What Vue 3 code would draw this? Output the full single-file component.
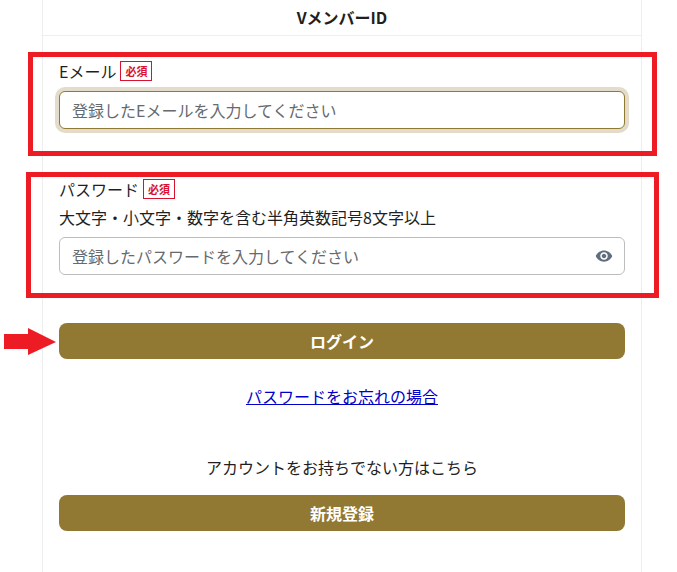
<template>
  <div class="page">
    <div class="panel">
      <h1 class="panel-title">VメンバーID</h1>
      <form class="login-form" @submit.prevent>
        <div class="form-group email-group">
          <div class="label-row">
            <label for="email">Eメール</label>
            <span class="required">必須</span>
          </div>
          <input id="email" class="text-input focused" type="text" placeholder="登録したEメールを入力してください" />
        </div>
        <div class="form-group password-group">
          <div class="label-row">
            <label for="password">パスワード</label>
            <span class="required">必須</span>
          </div>
          <p class="hint">大文字・小文字・数字を含む半角英数記号8文字以上</p>
          <div class="input-wrap">
            <input id="password" class="text-input" type="password" placeholder="登録したパスワードを入力してください" />
            <svg class="eye-icon" viewBox="0 0 24 24" width="18" height="18">
              <path fill="#5f6f7f" d="M12 4.5C7 4.5 2.73 7.61 1 12c1.73 4.39 6 7.5 11 7.5s9.27-3.11 11-7.5c-1.73-4.39-6-7.5-11-7.5zM12 17c-2.76 0-5-2.24-5-5s2.24-5 5-5 5 2.24 5 5-2.24 5-5 5zm0-8c-1.66 0-3 1.34-3 3s1.34 3 3 3 3-1.34 3-3-1.34-3-3-3z" />
            </svg>
          </div>
        </div>
        <button class="gold-btn login-btn" type="button">ログイン</button>
        <div class="forgot"><a href="#">パスワードをお忘れの場合</a></div>
        <p class="no-account">アカウントをお持ちでない方はこちら</p>
        <button class="gold-btn" type="button">新規登録</button>
      </form>
    </div>

    <!-- annotations drawn over the screenshot -->
    <div class="mark mark-email"></div>
    <div class="mark mark-password"></div>
    <svg class="arrow" viewBox="0 0 52 28" width="52" height="28">
      <polygon fill="#ed1c24" points="0,6 24,6 24,0 52,14 24,27 24,21 0,21" />
    </svg>
  </div>
</template>

<script setup>
</script>

<style>
html, body {
  margin: 0;
  background: #fff;
  overflow: hidden;
}
</style>

<style scoped>
.page {
  position: relative;
  width: 677px;
  height: 572px;
  overflow: hidden;
  font-family: "Noto Sans CJK JP", "Noto Sans", sans-serif;
  font-size: 16px;
  color: #1f1f1f;
}
.panel {
  box-sizing: border-box;
  width: 600px;
  height: 572px;
  margin-left: 42px;
  border-left: 1px solid #eeeeee;
  border-right: 1px solid #eeeeee;
}
.panel-title {
  box-sizing: border-box;
  height: 36px;
  margin: 0;
  border-bottom: 1px solid #eeeeee;
  font-size: 16px;
  font-weight: 700;
  line-height: 34px;
  text-align: center;
}
.login-form {
  padding: 25px 16px 0;
}
.label-row {
  display: flex;
  align-items: center;
  gap: 4px;
  height: 20px;
  margin-bottom: 10px;
}
.label-row label {
  line-height: 20px;
}
.required {
  box-sizing: border-box;
  width: 32px;
  height: 20px;
  border: 1px solid #d9112f;
  color: #d9112f;
  font-size: 11px;
  font-weight: 700;
  line-height: 18px;
  text-align: center;
}
.password-group {
  margin-top: 50px;
}
.password-group .label-row {
  margin-bottom: 6px;
}
.hint {
  margin: 0 0 8px;
  line-height: 24px;
}
.input-wrap {
  position: relative;
}
.text-input {
  display: block;
  box-sizing: border-box;
  width: 100%;
  height: 38px;
  padding: 0 40px 0 12px;
  border: 1px solid #bdbdbd;
  border-radius: 6px;
  background: #fff;
  font-family: inherit;
  font-size: 16px;
  color: #212529;
  outline: none;
}
.text-input::placeholder {
  color: #666a6e;
  opacity: 1;
}
.text-input.focused {
  border-color: #917933;
  box-shadow: 0 0 0 4px #e3dccb;
}
.eye-icon {
  position: absolute;
  top: 10px;
  right: 12px;
}
.gold-btn {
  display: block;
  width: 100%;
  height: 36px;
  padding: 0;
  border: none;
  border-radius: 8px;
  background: #917933;
  color: #fff;
  font-family: inherit;
  font-size: 16px;
  font-weight: 700;
}
.login-btn {
  margin-top: 48px;
}
.forgot {
  margin-top: 25px;
  line-height: 24px;
  text-align: center;
}
.forgot a {
  color: #0000c8;
}
.no-account {
  margin: 47px 0 0;
  line-height: 24px;
  text-align: center;
}
.no-account + .gold-btn {
  margin-top: 16px;
}
.mark {
  position: absolute;
  box-sizing: border-box;
  border: 5px solid #ed1c24;
}
.mark-email {
  left: 28px;
  top: 52px;
  width: 629px;
  height: 104px;
}
.mark-password {
  left: 26px;
  top: 172px;
  width: 633px;
  height: 126px;
}
.arrow {
  position: absolute;
  left: 4px;
  top: 328px;
}
</style>
